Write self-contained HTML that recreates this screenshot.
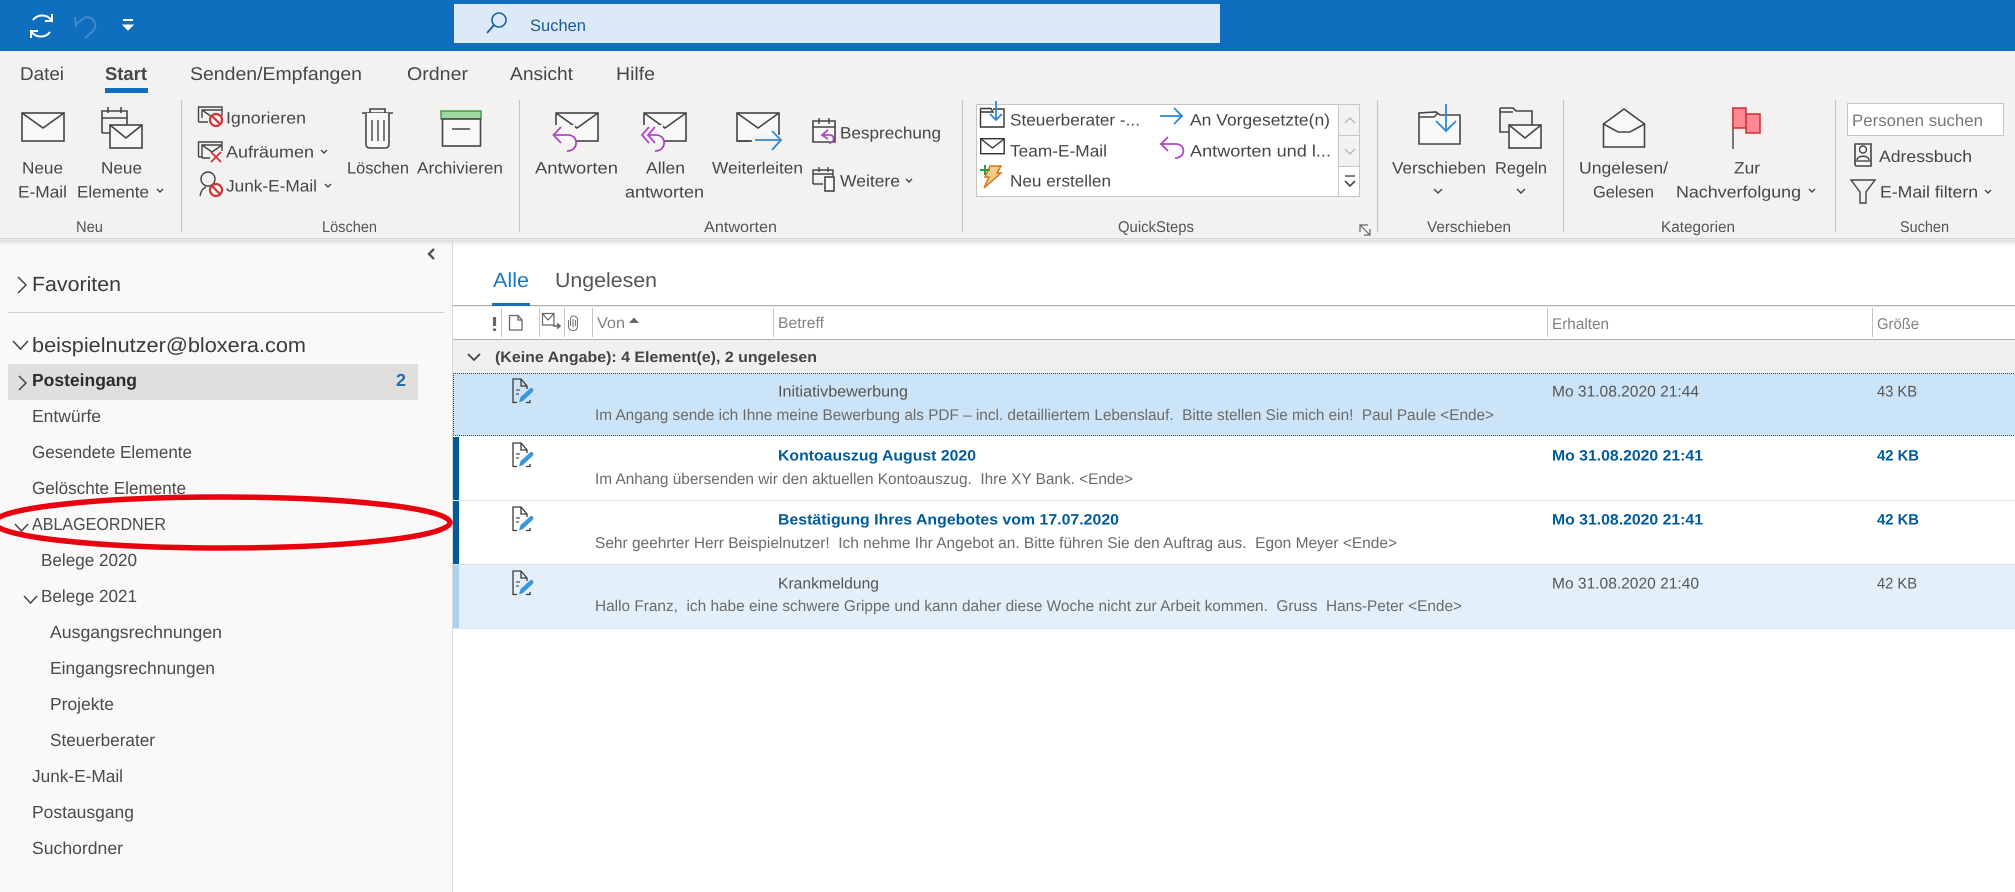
<!DOCTYPE html>
<html lang="de">
<head>
<meta charset="utf-8">
<title>Outlook</title>
<style>
html,body{margin:0;padding:0;background:#fff;width:2015px;height:892px;overflow:hidden}
svg{display:block}
text{font-family:"Liberation Sans",Arial,sans-serif;text-rendering:geometricPrecision;white-space:pre}
.r{font-size:16.5px;fill:#484644;transform:translateY(-.7px)}
.g{font-size:15.5px;fill:#555}
.t{font-size:18.5px;fill:#484644;transform:translateY(-1px)}
.n{font-size:17.5px;fill:#4a4a4a;transform:translateY(-1px)}
.h{font-size:15.5px;fill:#808080}
.s{font-size:15.5px;fill:#555;transform:translateY(-.6px)}
.p{font-size:15.5px;fill:#6a6a6a;transform:translateY(-.8px)}
.b{font-size:15px;fill:#005A9E;font-weight:bold;transform:translateY(-.4px)}
.i{fill:none;stroke:#444;stroke-width:1.6}
.e{fill:#f8f8f8;stroke:#444;stroke-width:1.6}
.c{fill:none;stroke:#444;stroke-width:1.4}
.pu{fill:none;stroke:#B146C2;stroke-width:1.8}
.bl{fill:none;stroke:#2B88D8;stroke-width:1.8}
</style>
</head>
<body>
<svg width="2015" height="892" viewBox="0 0 2015 892" xmlns="http://www.w3.org/2000/svg">
<defs>
<linearGradient id="sh" x1="0" y1="0" x2="0" y2="1"><stop offset="0" stop-color="#dcdcdc"/><stop offset="1" stop-color="#dcdcdc" stop-opacity="0"/></linearGradient>
<g id="env"><rect x="0" y="0" width="42" height="28" class="e"/><path d="M0 0L21 15L42 0" class="i"/></g>
<g id="msg">
<path d="M7 24.500H3V1H11L17 8V11" fill="none" stroke="#3a3a3a" stroke-width="1.3"/><path d="M11 1V8H17" fill="none" stroke="#3a3a3a" stroke-width="1.3"/>
<path d="M6 12H10M6 16H9" fill="none" stroke="#555" stroke-width="1.2"/><path d="M16 24.500H20V22" fill="none" stroke="#3a3a3a" stroke-width="1.3"/>
<path d="M9 24.500L10.500 19L20 10.500Q22 9 23 11Q24 12.500 22.500 14L13 23Z" fill="#3A96DD"/>
</g>
</defs>

<rect width="2015" height="892" fill="#fff"/>
<!-- title bar -->
<rect width="2015" height="51" fill="#106EBE"/>
<rect x="454" y="4" width="766" height="39" fill="#DCE9F7"/>
<path d="M33 20A11.500 11.500 0 0 1 52 21M52 14V21H45" fill="none" stroke="#fff" stroke-width="2"/>
<path d="M50 32A11.500 11.500 0 0 1 31 31M31 38V31H38" fill="none" stroke="#fff" stroke-width="2"/>
<path d="M76 27L75 17M75 25L84 18C92 14 99 25 93 31L85 38" fill="none" stroke="#3F8BCF" stroke-width="2"/>
<path d="M123 20H133" stroke="#fff" stroke-width="2" fill="none"/><path d="M123 25L128 30L133 25Z" fill="#fff" stroke="#fff"/>
<circle cx="499" cy="20" r="7" fill="none" stroke="#1F5F9E" stroke-width="1.6"/><path d="M494 25L487 33" stroke="#1F5F9E" stroke-width="1.8"/>
<text x="530" y="31" font-size="16.500" fill="#1A5A96" textLength="56" lengthAdjust="spacingAndGlyphs">Suchen</text>

<!-- ribbon -->
<rect y="51" width="2015" height="188" fill="#F3F2F1"/>
<rect y="238" width="2015" height="1.500" fill="#D8D6D4"/>
<text class="t" x="20" y="81" textLength="44" lengthAdjust="spacingAndGlyphs">Datei</text>
<text class="t" x="105" y="81" textLength="42" lengthAdjust="spacingAndGlyphs" font-weight="bold">Start</text>
<rect x="105" y="88" width="43" height="5" fill="#106EBE"/>
<text class="t" x="190" y="81" textLength="172" lengthAdjust="spacingAndGlyphs">Senden/Empfangen</text>
<text class="t" x="407" y="81" textLength="61" lengthAdjust="spacingAndGlyphs">Ordner</text>
<text class="t" x="510" y="81" textLength="63" lengthAdjust="spacingAndGlyphs">Ansicht</text>
<text class="t" x="616" y="81" textLength="39" lengthAdjust="spacingAndGlyphs">Hilfe</text>

<path d="M181.500 100V232M519.500 100V232M962.500 100V232M1377.500 100V232M1563.500 100V232M1835.500 100V232" stroke="#C8C6C4" stroke-width="1.200"/>

<!-- Neu -->
<use href="#env" x="22" y="113"/>
<text class="r" x="22" y="174" textLength="41" lengthAdjust="spacingAndGlyphs">Neue</text>
<text class="r" x="18" y="198" textLength="49" lengthAdjust="spacingAndGlyphs">E-Mail</text>
<path d="M102 133V111H127V125M102 118H127M108 107V113M121 107V113M102 133H110" class="i"/>
<rect x="110" y="125" width="32" height="23" class="e"/><path d="M110 125L126 138L142 125" class="i"/>
<text class="r" x="101" y="174" textLength="41" lengthAdjust="spacingAndGlyphs">Neue</text>
<text class="r" x="77" y="198" textLength="72" lengthAdjust="spacingAndGlyphs">Elemente</text>
<path d="M157 189L160 192L163 189" class="c"/>
<text class="g" x="76" y="232" textLength="27" lengthAdjust="spacingAndGlyphs">Neu</text>

<!-- Löschen -->
<path d="M198.500 122V107H222V110M198.500 122H208M202 118V110H222V116" class="c"/>
<path d="M202 110L212 117" class="c"/>
<circle cx="216" cy="120" r="6" fill="#f8f8f8" stroke="#D13438" stroke-width="2.200"/><path d="M212 116L220 124" stroke="#D13438" stroke-width="2.200"/>
<text class="r" x="226" y="124" textLength="80" lengthAdjust="spacingAndGlyphs">Ignorieren</text>
<path d="M198.500 157V142H222V145M198.500 157H202M202 158V145H222V151M202 158H210M202 145L212 152L222 145" class="c"/>
<path d="M211 152L221 162M221 152L211 162" stroke="#D13438" stroke-width="1.800"/>
<text class="r" x="226" y="158" textLength="88" lengthAdjust="spacingAndGlyphs">Aufräumen</text>
<path d="M321 150L324 153L327 150" class="c"/>
<circle cx="208" cy="179" r="7" class="c"/><path d="M200 196C201 191 203 188 206 187" class="c"/>
<circle cx="216" cy="190" r="6" fill="#f8f8f8" stroke="#D13438" stroke-width="2.200"/><path d="M212 186L220 194" stroke="#D13438" stroke-width="2.200"/>
<text class="r" x="226" y="192" textLength="91" lengthAdjust="spacingAndGlyphs">Junk-E-Mail</text>
<path d="M325 184L328 187L331 184" class="c"/>
<path d="M362 113H393M370 113V109H385V113" class="i"/>
<path d="M366 113V144Q366 148 370 148H385Q389 148 389 144V113" class="e"/>
<path d="M372 120V141M378 120V141M384 120V141" class="c"/>
<rect x="441" y="111" width="40" height="8" fill="#9FD89F" stroke="#3C9A3C" stroke-width="1.400"/>
<rect x="442.500" y="119" width="38" height="27" class="e"/><path d="M452 129H470" class="i"/>
<text class="r" x="347" y="174" textLength="62" lengthAdjust="spacingAndGlyphs">Löschen</text>
<text class="r" x="417" y="174" textLength="86" lengthAdjust="spacingAndGlyphs">Archivieren</text>
<text class="g" x="322" y="232" textLength="55" lengthAdjust="spacingAndGlyphs">Löschen</text>

<!-- Antworten -->
<use href="#env" x="556" y="113"/>
<rect x="552" y="125" width="23" height="18" fill="#F8F8F8"/><rect x="552" y="125" width="3.500" height="18" fill="#F3F2F1"/>
<path d="M561 127L553.500 135L561 143M553.500 135H568C579 135 579 151 567 151" class="pu"/>
<text class="r" x="535" y="174" textLength="83" lengthAdjust="spacingAndGlyphs">Antworten</text>
<use href="#env" x="644" y="113"/>
<rect x="640" y="125" width="23" height="18" fill="#F8F8F8"/><rect x="640" y="125" width="3.500" height="18" fill="#F3F2F1"/>
<path d="M649 127L642 135L649 143M655 127L648 135L655 143M648 135H656C667 135 667 151 655 151" class="pu"/>
<text class="r" x="646" y="174" textLength="39" lengthAdjust="spacingAndGlyphs">Allen</text>
<text class="r" x="625" y="198" textLength="79" lengthAdjust="spacingAndGlyphs">antworten</text>
<use href="#env" x="737" y="113"/>
<rect x="752" y="135" width="30" height="12" fill="#F3F2F1"/>
<path d="M737 141H750" class="i"/>
<path d="M755 140H781M772 131L781 140L772 150" class="bl"/>
<text class="r" x="712" y="174" textLength="91" lengthAdjust="spacingAndGlyphs">Weiterleiten</text>
<path d="M813 142V121H835V142Z" class="e"/><path d="M813 127H835M819 118V124M829 118V124" class="c"/>
<path d="M828 130L822 135L828 139M822 135H830C835 135 835 143 829 143" class="pu" stroke-width="1.600"/>
<text class="r" x="840" y="139" textLength="101" lengthAdjust="spacingAndGlyphs">Besprechung</text>
<path d="M813 184V170H833V176M813 174H833M819 167V172M828 167V172M813 184H823" class="c"/><rect x="825" y="177" width="9" height="14" class="e"/>
<text class="r" x="840" y="187" textLength="60" lengthAdjust="spacingAndGlyphs">Weitere</text>
<path d="M906 179L909 182L912 179" class="c"/>
<text class="g" x="704" y="232" textLength="73" lengthAdjust="spacingAndGlyphs">Antworten</text>

<!-- QuickSteps -->
<rect x="976.500" y="104.500" width="383" height="92" fill="#fff" stroke="#C8C6C4"/>
<rect x="1339" y="105" width="20" height="31" fill="#F3F2F1"/><rect x="1339" y="136.500" width="20" height="30" fill="#F3F2F1"/>
<path d="M1338.500 104V197M1339 135.500H1360M1339 166.500H1360" stroke="#C8C6C4"/>
<path d="M1345 123L1350 118L1355 123M1345 149L1350 154L1355 149" fill="none" stroke="#B8B8B8" stroke-width="1.400"/>
<path d="M1345 176H1355" stroke="#444" stroke-width="1.400"/><path d="M1345 181L1350 186L1355 181" fill="none" stroke="#444" stroke-width="1.600"/>
<path d="M980.500 108.500V127H1004V109H1000M980.500 108.500H991L993 112H986L980.500 112M993 109H1000" fill="none" stroke="#333" stroke-width="1.400"/>
<path d="M996 101V120M990 114L996 120L1002 114" class="bl" stroke-width="1.500"/>
<text class="r" x="1010" y="126" textLength="130" lengthAdjust="spacingAndGlyphs">Steuerberater -...</text>
<rect x="980.700" y="138.700" width="23.500" height="15" fill="#fff" stroke="#333" stroke-width="1.400"/><path d="M981 139L992.500 148L1004 139" fill="none" stroke="#333" stroke-width="1.400"/>
<text class="r" x="1010" y="157" textLength="97" lengthAdjust="spacingAndGlyphs">Team-E-Mail</text>
<path d="M990 166H1001L997 173H1001L984 188L989 177H985Z" fill="#F9C88A" stroke="#D9731A" stroke-width="1.500"/>
<path d="M985 165V175M980 170H990" stroke="#2E9E44" stroke-width="2"/>
<text class="r" x="1010" y="187" textLength="101" lengthAdjust="spacingAndGlyphs">Neu erstellen</text>
<path d="M1160 116H1182M1174 108L1182 116L1174 124" class="bl"/>
<text class="r" x="1190" y="126" textLength="140" lengthAdjust="spacingAndGlyphs">An Vorgesetzte(n)</text>
<path d="M1168 137L1161 144L1168 151M1161 144H1176C1186 144 1186 158 1175 158" class="pu"/>
<text class="r" x="1190" y="157" textLength="141" lengthAdjust="spacingAndGlyphs">Antworten und l...</text>
<text class="g" x="1118" y="232" textLength="76" lengthAdjust="spacingAndGlyphs">QuickSteps</text>
<path d="M1360 232V225H1368M1360 225L1370 235M1364 235H1370V229" fill="none" stroke="#666" stroke-width="1.200"/>

<!-- Verschieben -->
<path d="M1419 113V144H1460V115H1440L1436 112Z" class="e"/><path d="M1419 117H1434L1438 113" class="c"/>
<path d="M1446 104V131M1436 121L1446 131L1456 121" class="bl"/>
<text class="r" x="1392" y="174" textLength="94" lengthAdjust="spacingAndGlyphs">Verschieben</text>
<path d="M1434 189L1438 193L1442 189" class="c"/>
<text class="g" x="1427" y="232" textLength="84" lengthAdjust="spacingAndGlyphs">Verschieben</text>
<path d="M1500 108H1513L1516 111H1532V125M1500 108V132H1509M1500 112H1513" class="i"/>
<rect x="1509" y="125" width="32" height="23" class="e"/><path d="M1509 125L1525 138L1541 125" class="i"/>
<text class="r" x="1495" y="174" textLength="52" lengthAdjust="spacingAndGlyphs">Regeln</text>
<path d="M1517 189L1521 193L1525 189" class="c"/>

<!-- Kategorien -->
<path d="M1603.500 124L1624 109L1644.500 124V147H1603.500Z" class="e"/><path d="M1603.500 124L1618 132H1630L1644.500 124" class="i"/>
<text class="r" x="1579" y="174" textLength="89" lengthAdjust="spacingAndGlyphs">Ungelesen/</text>
<text class="r" x="1593" y="198" textLength="61" lengthAdjust="spacingAndGlyphs">Gelesen</text>
<path d="M1733 108V149" stroke="#444" stroke-width="1.400"/>
<rect x="1746" y="114" width="14" height="19" fill="#FF8A96" stroke="#D13438" stroke-width="1.600"/>
<rect x="1733" y="108" width="13" height="20" fill="#FF8A96" stroke="#D13438" stroke-width="1.600"/>
<text class="r" x="1734" y="174" textLength="26" lengthAdjust="spacingAndGlyphs">Zur</text>
<text class="r" x="1676" y="198" textLength="125" lengthAdjust="spacingAndGlyphs">Nachverfolgung</text>
<path d="M1809 189L1812 192L1815 189" class="c"/>
<text class="g" x="1661" y="232" textLength="74" lengthAdjust="spacingAndGlyphs">Kategorien</text>

<!-- Suchen -->
<rect x="1847.500" y="103.500" width="156" height="32" fill="#fff" stroke="#C8C6C4"/>
<text x="1852" y="126" font-size="16.500" fill="#777" textLength="131" lengthAdjust="spacingAndGlyphs">Personen suchen</text>
<path d="M1855 144H1871V166H1857Q1855 166 1855 164Z" class="e"/><path d="M1855 161H1871" class="c"/><circle cx="1863" cy="149.500" r="3.500" class="c"/><path d="M1857 160C1857 155 1869 155 1869 160" class="c"/>
<text x="1879" y="162" font-size="16.500" fill="#484644" textLength="93" lengthAdjust="spacingAndGlyphs">Adressbuch</text>
<path d="M1851 180H1875L1866 192V203H1860V192Z" class="c" stroke-width="1.600"/>
<text class="r" x="1880" y="198" textLength="98" lengthAdjust="spacingAndGlyphs">E-Mail filtern</text>
<path d="M1985 190L1988 193L1991 190" class="c"/>
<text class="g" x="1900" y="232" textLength="49" lengthAdjust="spacingAndGlyphs">Suchen</text>

<!-- nav pane -->
<rect y="240" width="452" height="652" fill="#FAF9F8"/>
<rect x="452" y="240" width="1" height="652" fill="#DADADA"/>
<rect y="240" width="2015" height="6" fill="url(#sh)"/>
<path d="M434 249L429 254L434 259" fill="none" stroke="#555" stroke-width="2.400"/>
<path d="M18 277L26 285L18 293" fill="none" stroke="#444" stroke-width="1.500"/>
<text x="32" y="291" font-size="20.500" fill="#3a3a3a" textLength="89" lengthAdjust="spacingAndGlyphs">Favoriten</text>
<rect x="8" y="312" width="436" height="1" fill="#D0D0D0"/>
<path d="M13 341L20.500 349L28 341" fill="none" stroke="#444" stroke-width="1.500"/>
<text x="32" y="352" font-size="20.500" fill="#3a3a3a" textLength="274" lengthAdjust="spacingAndGlyphs">beispielnutzer@bloxera.com</text>
<rect x="8" y="364" width="410" height="36" fill="#E1DFDD"/>
<path d="M19 376L26 383L19 390" fill="none" stroke="#444" stroke-width="1.500"/>
<text x="32" y="386" font-size="17.500" font-weight="bold" fill="#2b2b2b" textLength="105" lengthAdjust="spacingAndGlyphs">Posteingang</text>
<text x="396" y="386" font-size="17.500" font-weight="bold" fill="#2A6CB0" textLength="10" lengthAdjust="spacingAndGlyphs">2</text>
<text class="n" x="32" y="423" textLength="69" lengthAdjust="spacingAndGlyphs">Entwürfe</text>
<text class="n" x="32" y="459" textLength="160" lengthAdjust="spacingAndGlyphs">Gesendete Elemente</text>
<text class="n" x="32" y="495" textLength="154" lengthAdjust="spacingAndGlyphs">Gelöschte Elemente</text>
<path d="M15 524L21.500 531L28 524" fill="none" stroke="#444" stroke-width="1.500"/>
<text class="n" x="32" y="531" textLength="134" lengthAdjust="spacingAndGlyphs">ABLAGEORDNER</text>
<text class="n" x="41" y="567" textLength="96" lengthAdjust="spacingAndGlyphs">Belege 2020</text>
<path d="M24 596L30.500 603L37 596" fill="none" stroke="#444" stroke-width="1.500"/>
<text class="n" x="41" y="603" textLength="96" lengthAdjust="spacingAndGlyphs">Belege 2021</text>
<text class="n" x="50" y="639" textLength="172" lengthAdjust="spacingAndGlyphs">Ausgangsrechnungen</text>
<text class="n" x="50" y="675" textLength="165" lengthAdjust="spacingAndGlyphs">Eingangsrechnungen</text>
<text class="n" x="50" y="711" textLength="64" lengthAdjust="spacingAndGlyphs">Projekte</text>
<text class="n" x="50" y="747" textLength="105" lengthAdjust="spacingAndGlyphs">Steuerberater</text>
<text class="n" x="32" y="783" textLength="91" lengthAdjust="spacingAndGlyphs">Junk-E-Mail</text>
<text class="n" x="32" y="819" textLength="102" lengthAdjust="spacingAndGlyphs">Postausgang</text>
<text class="n" x="32" y="855" textLength="91" lengthAdjust="spacingAndGlyphs">Suchordner</text>

<!-- list tabs -->
<text x="493" y="287" font-size="20.500" fill="#1A77C4" textLength="36" lengthAdjust="spacingAndGlyphs">Alle</text>
<text x="555" y="287" font-size="20.500" fill="#555" textLength="102" lengthAdjust="spacingAndGlyphs">Ungelesen</text>
<rect x="453" y="305" width="1562" height="1.200" fill="#B0B0B0"/>
<rect x="492" y="303" width="38" height="3" fill="#1B6FB5"/>
<rect x="453" y="339" width="1562" height="1.200" fill="#B0B0B0"/>
<path d="M501.500 308V337M539.500 308V337M564.500 308V337M592.500 308V337M773.500 308V337M1547.500 308V337M1872.500 308V337" stroke="#C4C4C4"/>
<path d="M494.500 317V326M494.500 328.500V331" stroke="#666" stroke-width="3.200"/>
<path d="M509.500 330V315.500H518L522 320V330Z M518 315.500V320H522" fill="none" stroke="#666" stroke-width="1.300"/>
<path d="M542.500 313.500H554V325H542.500Z M542.500 313.500L548 320L554 313.500" fill="none" stroke="#666" stroke-width="1.200"/>
<path d="M553 326H560M557 323.500L560 326L557 328.500" fill="none" stroke="#666" stroke-width="1.600"/>
<path d="M568.500 320V326Q568.500 330.500 573 330.500Q577.500 330.500 577.500 326V320Q577.500 316 573 316Q570.500 316 570.500 320V326M573 319V327M575.500 320V326" fill="none" stroke="#777" stroke-width="1.100"/>
<text class="h" x="597" y="328" textLength="28" lengthAdjust="spacingAndGlyphs">Von</text>
<path d="M629 323L634 317.500L639 323Z" fill="#666"/>
<text class="h" x="778" y="328" textLength="46" lengthAdjust="spacingAndGlyphs">Betreff</text>
<text class="h" x="1552" y="329" textLength="57" lengthAdjust="spacingAndGlyphs">Erhalten</text>
<text class="h" x="1877" y="329" textLength="42" lengthAdjust="spacingAndGlyphs">Größe</text>

<!-- group -->
<rect x="453" y="340" width="1562" height="33" fill="#F0F0F0"/>
<path d="M468 354L474 360L480 354" fill="none" stroke="#444" stroke-width="1.800"/>
<text x="495" y="362" font-size="15" font-weight="bold" fill="#444" textLength="322" lengthAdjust="spacingAndGlyphs">(Keine Angabe): 4 Element(e), 2 ungelesen</text>

<!-- rows -->
<rect x="453" y="373" width="1562" height="63" fill="#CCE4F7"/>
<path d="M453 373.500H2015M453 435.500H2015M453.500 373V436" stroke="#444" stroke-dasharray="1 1" fill="none"/>
<rect x="453" y="437" width="6" height="63" fill="#005A9E"/>
<rect x="453" y="501" width="6" height="63" fill="#005A9E"/>
<rect x="453" y="565" width="1562" height="63" fill="#E3F0FA"/>
<rect x="453" y="565" width="6" height="63" fill="#A9D1F0"/>
<path d="M459 500.500H2015M453 564.500H2015M453 628.500H2015" stroke="#DDE3E8"/>

<use href="#msg" x="510" y="378"/>
<text class="s" x="778" y="397" textLength="130" lengthAdjust="spacingAndGlyphs">Initiativbewerbung</text>
<text class="p" x="595" y="421" textLength="899" lengthAdjust="spacingAndGlyphs">Im Angang sende ich Ihne meine Bewerbung als PDF – incl. detailliertem Lebenslauf.  Bitte stellen Sie mich ein!  Paul Paule &lt;Ende&gt;</text>
<text class="s" x="1552" y="397" textLength="147" lengthAdjust="spacingAndGlyphs">Mo 31.08.2020 21:44</text>
<text class="s" x="1877" y="397" textLength="40" lengthAdjust="spacingAndGlyphs">43 KB</text>

<use href="#msg" x="510" y="442"/>
<text class="b" x="778" y="461" textLength="198" lengthAdjust="spacingAndGlyphs">Kontoauszug August 2020</text>
<text class="p" x="595" y="485" textLength="538" lengthAdjust="spacingAndGlyphs">Im Anhang übersenden wir den aktuellen Kontoauszug.  Ihre XY Bank. &lt;Ende&gt;</text>
<text class="b" x="1552" y="461" textLength="151" lengthAdjust="spacingAndGlyphs">Mo 31.08.2020 21:41</text>
<text class="b" x="1877" y="461" textLength="42" lengthAdjust="spacingAndGlyphs">42 KB</text>

<use href="#msg" x="510" y="506"/>
<text class="b" x="778" y="525" textLength="341" lengthAdjust="spacingAndGlyphs">Bestätigung Ihres Angebotes vom 17.07.2020</text>
<text class="p" x="595" y="549" textLength="802" lengthAdjust="spacingAndGlyphs">Sehr geehrter Herr Beispielnutzer!  Ich nehme Ihr Angebot an. Bitte führen Sie den Auftrag aus.  Egon Meyer &lt;Ende&gt;</text>
<text class="b" x="1552" y="525" textLength="151" lengthAdjust="spacingAndGlyphs">Mo 31.08.2020 21:41</text>
<text class="b" x="1877" y="525" textLength="42" lengthAdjust="spacingAndGlyphs">42 KB</text>

<use href="#msg" x="510" y="570"/>
<text class="s" x="778" y="589" textLength="101" lengthAdjust="spacingAndGlyphs">Krankmeldung</text>
<text class="p" x="595" y="612" textLength="867" lengthAdjust="spacingAndGlyphs">Hallo Franz,  ich habe eine schwere Grippe und kann daher diese Woche nicht zur Arbeit kommen.  Gruss  Hans-Peter &lt;Ende&gt;</text>
<text class="s" x="1552" y="589" textLength="147" lengthAdjust="spacingAndGlyphs">Mo 31.08.2020 21:40</text>
<text class="s" x="1877" y="589" textLength="40" lengthAdjust="spacingAndGlyphs">42 KB</text>

<!-- annotation -->
<ellipse cx="222" cy="522.500" rx="228" ry="25.500" fill="none" stroke="#E8000F" stroke-width="5.500"/>
</svg>
</body>
</html>
